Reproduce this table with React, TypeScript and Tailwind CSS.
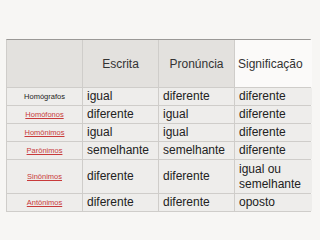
const rows = [
  { label: 'Homógrafos', link: false, cells: ['igual', 'diferente', 'diferente'], tall: false },
  { label: 'Homófonos', link: true, cells: ['diferente', 'igual', 'diferente'], tall: false },
  { label: 'Homônimos', link: true, cells: ['igual', 'igual', 'diferente'], tall: false },
  { label: 'Parônimos', link: true, cells: ['semelhante', 'semelhante', 'diferente'], tall: false },
  { label: 'Sinônimos', link: true, cells: ['diferente', 'diferente', 'igual ou semelhante'], tall: true },
  { label: 'Antônimos', link: true, cells: ['diferente', 'diferente', 'oposto'], tall: false },
];

export default function App() {
  return (
    <div className="w-[320px] h-[240px] bg-[#f7f6f4] pt-[39px] pl-[6px] font-['Liberation_Sans',Arial,sans-serif]">
      <div className="w-[305px] border-t border-t-[#9a9896] border-x border-b border-[#cfcdca] bg-[#cfcdca] grid grid-cols-[75px_75px_75px_77px] gap-px">
        <div className="h-[47px] bg-[#e3e1de]" />
        <div className="h-[47px] bg-[#e3e1de] flex items-center justify-center text-[12px] text-[#333]">Escrita</div>
        <div className="h-[47px] bg-[#e3e1de] flex items-center justify-center text-[12px] text-[#333]">Pronúncia</div>
        <div className="h-[47px] bg-[#fbfaf9] flex items-center pl-[3px] text-[12px] text-[#333]">Significação</div>
        {rows.map((r) => (
          <div key={r.label} className="contents">
            <div className={`${r.tall ? 'h-[33px]' : 'h-[17px]'} bg-[#eeedeb] flex items-center justify-center text-[7.5px]`}>
              {r.link ? (
                <span className="text-[#c83a3a] underline">{r.label}</span>
              ) : (
                <span className="text-[#222]">{r.label}</span>
              )}
            </div>
            {r.cells.map((c, i) => (
              <div
                key={i}
                className={`${r.tall ? 'h-[33px]' : 'h-[17px]'} bg-[#eeedeb] flex items-center pl-[4px] pr-[2px] text-[12px] leading-[15px] text-[#222]`}
              >
                {c}
              </div>
            ))}
          </div>
        ))}
      </div>
    </div>
  );
}
